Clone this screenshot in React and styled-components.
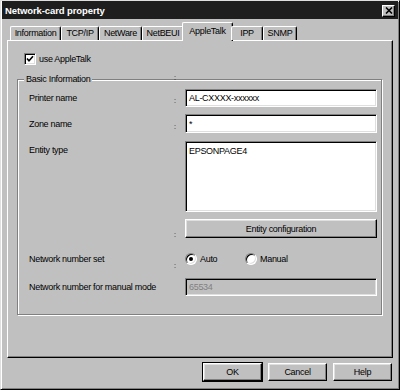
import styled, { createGlobalStyle } from "styled-components";

const Global = createGlobalStyle`
    html, body {
        margin: 0;
        padding: 0;
        background: #c0c0c0;
    }
    * {
        box-sizing: border-box;
    }
`;

const Window = styled.div`
    width: 400px;
    height: 390px;
    background: #c0c0c0;
    border: 1px solid;
    border-color: #dfdfdf #000 #000 #dfdfdf;
    box-shadow: inset 1px 1px 0 #fff, inset -1px -1px 0 #808080;
    padding: 0 1px 1px 1px;
    display: flex;
    flex-direction: column;
    font-family: "Liberation Sans", Arial, sans-serif;
    font-size: 9px;
    letter-spacing: -0.3px;
    color: #000;
`;

const TitleBar = styled.div`
    height: 18px;
    background: #1e1e1e;
    display: flex;
    align-items: center;
    justify-content: space-between;
    padding: 0 3px 0 3px;
`;

const Title = styled.span`
    color: #fff;
    font-weight: bold;
    font-size: 9.5px;
    letter-spacing: -0.1px;
`;

const CloseBtn = styled.div`
    width: 13px;
    height: 12px;
    background: #c0c0c0;
    border: 1px solid;
    border-color: #fff #000 #000 #fff;
    box-shadow: inset -1px -1px 0 #808080;
    display: flex;
    align-items: center;
    justify-content: center;
    margin-top: 1px;
`;

const Body = styled.div`
    padding: 3px 5px 0 5px;
    display: flex;
    flex-direction: column;
`;

const TabStrip = styled.div`
    display: flex;
    align-items: flex-end;
    height: 18px;
    padding-left: 3px;
    position: relative;
    z-index: 2;
`;

const Tab = styled.div`
    width: ${p => p.$w}px;
    height: ${p => (p.$active ? 19 : 14)}px;
    margin: ${p => (p.$active ? "0 -2px -1px -2px" : "0")};
    border-top: 1px solid #fff;
    border-left: 1px solid #fff;
    border-right: 1px solid #000;
    box-shadow: inset -1px 0 0 #808080;
    border-radius: 2px 2px 0 0;
    background: #c0c0c0;
    display: flex;
    justify-content: center;
    padding-top: ${p => (p.$active ? 3 : 1)}px;
    font-size: 9px;
`;

const Panel = styled.div`
    height: 318px;
    border: 1px solid;
    border-color: #fff #000 #000 #fff;
    box-shadow: inset -1px -1px 0 #808080;
    padding: 11px 10px 0 9px;
    display: flex;
    flex-direction: column;
`;

const CheckRow = styled.label`
    display: flex;
    align-items: center;
    gap: 3px;
    padding-left: 7px;
    height: 13px;
`;

const CheckBox = styled.span`
    width: 12px;
    height: 12px;
    background: #fff;
    border: 1px solid;
    border-color: #808080 #fff #fff #808080;
    box-shadow: inset 1px 1px 0 #000, inset -1px -1px 0 #dfdfdf;
    display: flex;
    align-items: center;
    justify-content: center;
`;

const GroupBox = styled.div`
    position: relative;
    margin-top: 14px;
    height: 236px;
    border: 1px solid #808080;
    box-shadow: inset 1px 1px 0 #fff, 1px 1px 0 #fff;
    padding: 9px 4px 0 11px;
    display: grid;
    grid-template-columns: 145px 11px 1fr;
    align-content: start;
`;

const Legend = styled.span`
    position: absolute;
    top: -6px;
    left: 6px;
    padding: 0 2px;
    background: #c0c0c0;
`;

const Colon = styled.span`
    font-size: 7px;
    letter-spacing: 0;
    line-height: 7px;
    align-self: end;
    padding-bottom: ${p => p.$pb || 0}px;
`;

const LegendColon = styled(Colon)`
    position: absolute;
    top: -6px;
    left: 156px;
`;

const Label = styled.span`
    align-self: ${p => (p.$top ? "start" : "center")};
    padding-top: ${p => (p.$top ? 4 : 0)}px;
    margin-top: ${p => p.$mt || 0}px;
`;

const Cell = styled.div`
    margin-top: ${p => p.$mt || 0}px;
    display: flex;
`;

const Input = styled.div`
    width: 100%;
    height: ${p => p.$h || 18}px;
    background: ${p => (p.$disabled ? "#c0c0c0" : "#fff")};
    color: ${p => (p.$disabled ? "#808080" : "#000")};
    border: 1px solid;
    border-color: #808080 #fff #fff #808080;
    box-shadow: inset 1px 1px 0 #000, inset -1px -1px 0 #dfdfdf;
    padding: ${p => (p.$list ? "4px 3px" : "0 3px")};
    display: flex;
    align-items: ${p => (p.$list ? "flex-start" : "center")};
`;

const Button = styled.button`
    width: ${p => p.$w ? `${p.$w}px` : "100%"};
    height: ${p => p.$h || 19}px;
    background: #c0c0c0;
    border: 1px solid;
    border-color: #fff #000 #000 #fff;
    box-shadow: inset -1px -1px 0 #808080, inset 1px 1px 0 #dfdfdf;
    outline: ${p => (p.$default ? "1px solid #000" : "none")};
    font: inherit;
    letter-spacing: inherit;
    color: #000;
    padding: 0;
`;

const RadioRow = styled.div`
    display: flex;
    align-items: center;
    height: 20px;
    margin-top: ${p => p.$mt || 0}px;
`;

const RadioOpt = styled.label`
    display: flex;
    align-items: center;
    gap: 3px;
    width: 60px;
`;

const Radio = styled.span`
    width: 12px;
    height: 12px;
    border-radius: 50%;
    background: #fff;
    border: 1px solid;
    border-color: #808080 #fff #fff #808080;
    box-shadow: inset 1px 1px 0 #000, inset -1px -1px 0 #dfdfdf;
    display: flex;
    align-items: center;
    justify-content: center;

    &::after {
        content: "";
        width: 4px;
        height: 4px;
        border-radius: 50%;
        background: ${p => (p.$on ? "#000" : "transparent")};
    }
`;

const Footer = styled.div`
    display: flex;
    justify-content: flex-end;
    gap: 6px;
    padding: 5px 6px 0 0;
`;

const tabs = [
    ["Information", 51],
    ["TCP/IP", 38],
    ["NetWare", 43],
    ["NetBEUI", 42],
    ["AppleTalk", 51],
    ["IPP", 32],
    ["SNMP", 34],
];

function App() {
    return (
        <>
            <Global />
            <Window>
                <TitleBar>
                    <Title>Network-card property</Title>
                    <CloseBtn>
                        <svg width="8" height="7" viewBox="0 0 8 7">
                            <path d="M1 0.5 L7 6.5 M7 0.5 L1 6.5" stroke="#000" strokeWidth="1.6" />
                        </svg>
                    </CloseBtn>
                </TitleBar>
                <Body>
                    <TabStrip>
                        {tabs.map(([name, w]) => (
                            <Tab key={name} $w={w} $active={name === "AppleTalk"}>{name}</Tab>
                        ))}
                    </TabStrip>
                    <Panel>
                        <CheckRow>
                            <CheckBox>
                                <svg width="8" height="8" viewBox="0 0 8 8">
                                    <path d="M1 3.5 L3 5.8 L7 1.2" stroke="#000" strokeWidth="1.6" fill="none" />
                                </svg>
                            </CheckBox>
                            use AppleTalk
                        </CheckRow>
                        <GroupBox>
                            <Legend>Basic Information</Legend>
                            <LegendColon>:</LegendColon>

                            <Label>Printer name</Label>
                            <Colon $pb={3}>:</Colon>
                            <Cell><Input>AL-CXXXX-xxxxxx</Input></Cell>

                            <Label $mt={7}>Zone name</Label>
                            <Colon $pb={3}>:</Colon>
                            <Cell $mt={7}><Input $h={19}>*</Input></Cell>

                            <Label $top $mt={8}>Entity type</Label>
                            <span />
                            <Cell $mt={8}><Input $list $h={71}>EPSONPAGE4</Input></Cell>

                            <span />
                            <Colon>:</Colon>
                            <Cell $mt={7}><Button>Entity configuration</Button></Cell>

                            <Label $mt={11}>Network number set</Label>
                            <Colon $pb={-4}>:</Colon>
                            <RadioRow $mt={11}>
                                <RadioOpt><Radio $on />Auto</RadioOpt>
                                <RadioOpt><Radio />Manual</RadioOpt>
                            </RadioRow>

                            <Label $mt={9}>Network number for manual mode</Label>
                            <span />
                            <Cell $mt={9}><Input $disabled>65534</Input></Cell>
                        </GroupBox>
                    </Panel>
                </Body>
                <Footer>
                    <Button $w={59} $h={18} $default>OK</Button>
                    <Button $w={59} $h={18}>Cancel</Button>
                    <Button $w={59} $h={18}>Help</Button>
                </Footer>
            </Window>
        </>
    );
}

export default App;
